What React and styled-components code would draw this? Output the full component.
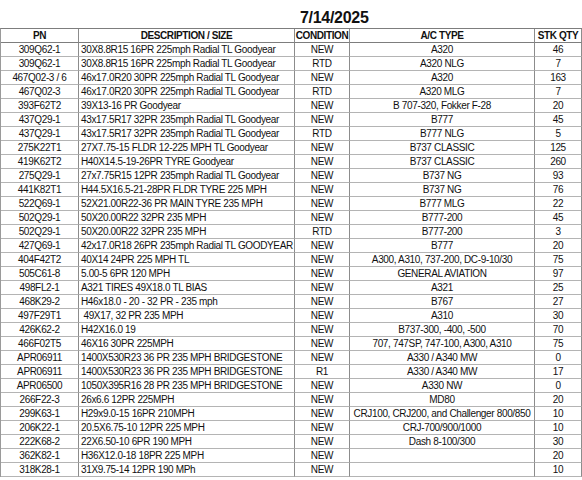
import React from "react";
import styled, { createGlobalStyle } from "styled-components";

const Global = createGlobalStyle`
  html, body { margin: 0; padding: 0; background: #fff; }
  body { font-family: "Liberation Sans", Arial, sans-serif; color: #111; }
`;

const rows = [
  ["309Q62-1", "30X8.8R15 16PR 225mph Radial TL Goodyear", "NEW", "A320", "46"],
  ["309Q62-1", "30X8.8R15 16PR 225mph Radial TL Goodyear", "RTD", "A320 NLG", "7"],
  ["467Q02-3 / 6", "46x17.0R20 30PR 225mph Radial TL Goodyear", "NEW", "A320", "163"],
  ["467Q02-3", "46x17.0R20 30PR 225mph Radial TL Goodyear", "RTD", "A320 MLG", "7"],
  ["393F62T2", "39X13-16 PR Goodyear", "NEW", "B 707-320, Fokker F-28", "20"],
  ["437Q29-1", "43x17.5R17 32PR 235mph Radial TL Goodyear", "NEW", "B777", "45"],
  ["437Q29-1", "43x17.5R17 32PR 235mph Radial TL Goodyear", "RTD", "B777 NLG", "5"],
  ["275K22T1", "27X7.75-15 FLDR 12-225 MPH TL Goodyear", "NEW", "B737 CLASSIC", "125"],
  ["419K62T2", "H40X14.5-19-26PR TYRE Goodyear", "NEW", "B737 CLASSIC", "260"],
  ["275Q29-1", "27x7.75R15 12PR 235mph Radial TL Goodyear", "NEW", "B737 NG", "93"],
  ["441K82T1", "H44.5X16.5-21-28PR FLDR TYRE 225 MPH", "NEW", "B737 NG", "76"],
  ["522Q69-1", "52X21.00R22-36 PR MAIN TYRE 235 MPH", "NEW", "B777 MLG", "22"],
  ["502Q29-1", "50X20.00R22 32PR 235 MPH", "NEW", "B777-200", "45"],
  ["502Q29-1", "50X20.00R22 32PR 235 MPH", "RTD", "B777-200", "3"],
  ["427Q69-1", "42x17.0R18 26PR 235mph Radial TL GOODYEAR", "NEW", "B777", "20"],
  ["404F42T2", "40X14 24PR 225 MPH TL", "NEW", "A300, A310, 737-200, DC-9-10/30", "75"],
  ["505C61-8", "5.00-5 6PR 120 MPH", "NEW", "GENERAL AVIATION", "97"],
  ["498FL2-1", "A321 TIRES 49X18.0 TL BIAS", "NEW", "A321", "25"],
  ["468K29-2", "H46x18.0 - 20 - 32 PR - 235 mph", "NEW", "B767", "27"],
  ["497F29T1", "\u00a049X17, 32 PR 235 MPH", "NEW", "A310", "30"],
  ["426K62-2", "H42X16.0 19", "NEW", "B737-300, -400, -500", "70"],
  ["466F02T5", "46X16 30PR 225MPH", "NEW", "707, 747SP, 747-100, A300, A310", "75"],
  ["APR06911", "1400X530R23 36 PR 235 MPH BRIDGESTONE", "NEW", "A330 / A340 MW", "0"],
  ["APR06911", "1400X530R23 36 PR 235 MPH BRIDGESTONE", "R1", "A330 / A340 MW", "17"],
  ["APR06500", "1050X395R16 28 PR 235 MPH BRIDGESTONE", "NEW", "A330 NW", "0"],
  ["266F22-3", "26x6.6 12PR 225MPH", "NEW", "MD80", "20"],
  ["299K63-1", "H29x9.0-15 16PR 210MPH", "NEW", "CRJ100, CRJ200, and Challenger 800/850", "10"],
  ["206K22-1", "20.5X6.75-10 12PR 225 MPH", "NEW", "CRJ-700/900/1000", "10"],
  ["222K68-2", "22X6.50-10 6PR 190 MPH", "NEW", "Dash 8-100/300", "30"],
  ["362K82-1", "H36X12.0-18 18PR 225 MPH", "NEW", "", "20"],
  ["318K28-1", "31X9.75-14 12PR 190 MPh", "NEW", "", "10"],
];

const COLS = "78px 216px 55px 185px 47px";

const Sheet = styled.div`
  width: 582px;
  height: 480px;
  overflow: hidden;
  background: #fff;
`;

const TitleRow = styled.div`
  display: grid;
  grid-template-columns: ${COLS};
  height: 28px;
  align-items: end;
`;

const Title = styled.div`
  grid-column: 3 / span 2;
  padding: 0 0 0 6px;
  font-size: 16px;
  line-height: 20px;
  font-weight: 700;
  letter-spacing: -0.3px;
  color: #111;
  white-space: nowrap;
`;

const Grid = styled.div`
  display: grid;
  grid-template-columns: ${COLS};
  grid-auto-rows: 14px;
  border-top: 1px solid #7d7d7d;
  border-left: 1px solid #9a9a9a;
`;

const Cell = styled.div`
  box-sizing: border-box;
  height: 14px;
  border-right: 1px solid #8c8c8c;
  border-bottom: 1px solid ${(p) => (p.$head ? "#7d7d7d" : "#b4b4b4")};
  font-size: 10px;
  font-weight: ${(p) => (p.$head ? 700 : 400)};
  letter-spacing: ${(p) => (p.$head ? "-0.4px" : "-0.35px")};
  line-height: 13px;
  text-align: ${(p) => (p.$left ? "left" : "center")};
  padding: 0 ${(p) => (p.$left ? "2px" : "0")};
  white-space: nowrap;
  overflow: hidden;
  color: #111;
`;

const headers = ["PN", "DESCRIPTION / SIZE", "CONDITION", "A/C TYPE", "STK QTY"];

export default function App() {
  return (
    <Sheet>
      <Global />
      <TitleRow>
        <Title>7/14/2025</Title>
      </TitleRow>
      <Grid>
        {headers.map((h) => (
          <Cell key={h} $head>
            {h}
          </Cell>
        ))}
        {rows.map((r, i) =>
          r.map((c, j) => (
            <Cell key={i + "-" + j} $left={j === 1}>
              {c}
            </Cell>
          ))
        )}
      </Grid>
    </Sheet>
  );
}
